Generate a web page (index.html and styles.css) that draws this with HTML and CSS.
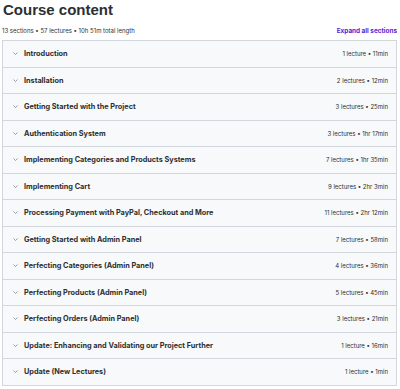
FILE: index.html
```html
<!DOCTYPE html>
<html lang="en">
<head>
  <meta charset="UTF-8" />
  <meta name="viewport" content="width=device-width, initial-scale=1.0"/>
  <title>Course content</title>
  <link rel="stylesheet" href="styles.css">
</head>
<body>

  <div class="curriculum">
    <h2 class="title">Course content</h2>
    <div class="summary">
      <span>13 sections • 57 lectures • 10h 51m total length</span>
      <a class="expand" href="#">Expand all sections</a>
    </div>

    <div class="sections">
      <div class="section"><span class="chev"><svg viewBox="0 0 10 6"><path d="M1 1l4 4 4-4"/></svg></span><span class="name">Introduction</span><span class="meta">1 lecture • 11min</span></div>
      <div class="section"><span class="chev"><svg viewBox="0 0 10 6"><path d="M1 1l4 4 4-4"/></svg></span><span class="name">Installation</span><span class="meta">2 lectures • 12min</span></div>
      <div class="section"><span class="chev"><svg viewBox="0 0 10 6"><path d="M1 1l4 4 4-4"/></svg></span><span class="name">Getting Started with the Project</span><span class="meta">3 lectures • 25min</span></div>
      <div class="section"><span class="chev"><svg viewBox="0 0 10 6"><path d="M1 1l4 4 4-4"/></svg></span><span class="name">Authentication System</span><span class="meta">3 lectures • 1hr 17min</span></div>
      <div class="section"><span class="chev"><svg viewBox="0 0 10 6"><path d="M1 1l4 4 4-4"/></svg></span><span class="name">Implementing Categories and Products Systems</span><span class="meta">7 lectures • 1hr 35min</span></div>
      <div class="section"><span class="chev"><svg viewBox="0 0 10 6"><path d="M1 1l4 4 4-4"/></svg></span><span class="name">Implementing Cart</span><span class="meta">9 lectures • 2hr 3min</span></div>
      <div class="section"><span class="chev"><svg viewBox="0 0 10 6"><path d="M1 1l4 4 4-4"/></svg></span><span class="name">Processing Payment with PayPal, Checkout and More</span><span class="meta">11 lectures • 2hr 12min</span></div>
      <div class="section"><span class="chev"><svg viewBox="0 0 10 6"><path d="M1 1l4 4 4-4"/></svg></span><span class="name">Getting Started with Admin Panel</span><span class="meta">7 lectures • 58min</span></div>
      <div class="section"><span class="chev"><svg viewBox="0 0 10 6"><path d="M1 1l4 4 4-4"/></svg></span><span class="name">Perfecting Categories (Admin Panel)</span><span class="meta">4 lectures • 36min</span></div>
      <div class="section"><span class="chev"><svg viewBox="0 0 10 6"><path d="M1 1l4 4 4-4"/></svg></span><span class="name">Perfecting Products (Admin Panel)</span><span class="meta">5 lectures • 45min</span></div>
      <div class="section"><span class="chev"><svg viewBox="0 0 10 6"><path d="M1 1l4 4 4-4"/></svg></span><span class="name">Perfecting Orders (Admin Panel)</span><span class="meta">3 lectures • 21min</span></div>
      <div class="section"><span class="chev"><svg viewBox="0 0 10 6"><path d="M1 1l4 4 4-4"/></svg></span><span class="name">Update: Enhancing and Validating our Project Further</span><span class="meta">1 lecture • 16min</span></div>
      <div class="section"><span class="chev"><svg viewBox="0 0 10 6"><path d="M1 1l4 4 4-4"/></svg></span><span class="name">Update (New Lectures)</span><span class="meta">1 lecture • 1min</span></div>
    </div>
  </div>

</body>
</html>
```

FILE: styles.css
```css
body {
  margin: 0;
  background: #fff;
  color: #2d2f31;
  font-family: Inter, 'Noto Sans', sans-serif;
}

.curriculum {
  padding: 0 3px 0 2px;
}

/* heading font is narrow, Arial widths fit it best */
.title {
  margin: 0;
  padding: 1px 0 0 1px;
  font-family: 'Liberation Sans', Arial, sans-serif;
  font-size: 15px;
  font-weight: 700;
  line-height: 18px;
}

.summary {
  display: flex;
  justify-content: space-between;
  align-items: center;
  height: 19px;
  padding-top: 2px;
  font-size: 6px;
  color: #2d2f31;
}

.expand {
  color: #5624d0;
  font-size: 6.4px;
  font-weight: 700;
  text-decoration: none;
}

.sections {
  border: 1px solid #d1d7dc;
  border-bottom: none;
}

.section {
  display: flex;
  align-items: center;
  height: 25.5px;
  padding: 0 8px 0 10px;
  background: #f7f9fa;
  border-bottom: 1px solid #d1d7dc;
}

.chev {
  display: flex;
  width: 11px;
}

.chev svg {
  width: 5px;
  height: 3px;
  fill: none;
  stroke: #6a6f73;
  stroke-width: 1.3;
}

.name {
  flex: 1;
  font-size: 7.3px;
  font-weight: 700;
}

.meta {
  font-size: 6px;
  color: #2d2f31;
}
```
